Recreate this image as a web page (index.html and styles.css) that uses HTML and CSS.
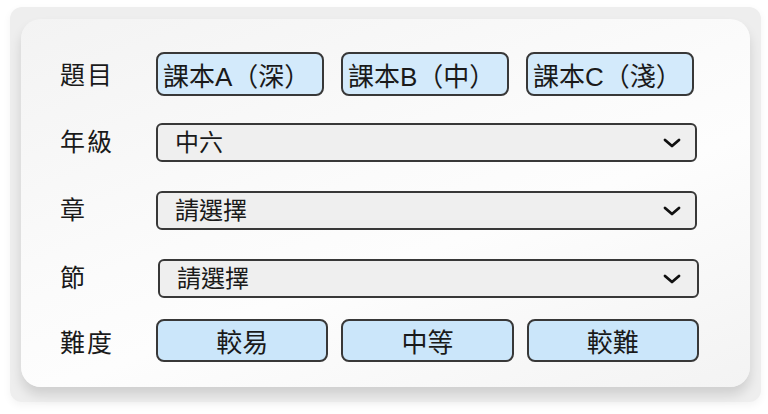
FILE: index.html
```html
<!DOCTYPE html>
<html lang="zh-Hant">
<head>
    <meta charset="UTF-8">
    <meta name="viewport" content="width=device-width, initial-scale=1.0">
    <title>練習設定</title>
    <link rel="stylesheet" href="styles.css">
</head>
<body>
    <div class="frame">
        <div class="card">
            <div class="row row-source">
                <span class="label">題目</span>
                <div class="source-list">
                    <button class="chip">課本A（深）</button>
                    <button class="chip">課本B（中）</button>
                    <button class="chip">課本C（淺）</button>
                </div>
            </div>

            <div class="row">
                <span class="label">年級</span>
                <div class="select-box">
                    <select>
                        <option>中六</option>
                    </select>
                    <svg class="chevron" viewBox="0 0 18 10" width="18" height="10"><path d="M2 2l7 6 7-6" fill="none" stroke="#111" stroke-width="2.8" stroke-linecap="round" stroke-linejoin="round"/></svg>
                </div>
            </div>

            <div class="row">
                <span class="label">章</span>
                <div class="select-box">
                    <select>
                        <option>請選擇</option>
                    </select>
                    <svg class="chevron" viewBox="0 0 18 10" width="18" height="10"><path d="M2 2l7 6 7-6" fill="none" stroke="#111" stroke-width="2.8" stroke-linecap="round" stroke-linejoin="round"/></svg>
                </div>
            </div>

            <div class="row row-section">
                <span class="label">節</span>
                <div class="select-box shifted">
                    <select>
                        <option>請選擇</option>
                    </select>
                    <svg class="chevron" viewBox="0 0 18 10" width="18" height="10"><path d="M2 2l7 6 7-6" fill="none" stroke="#111" stroke-width="2.8" stroke-linecap="round" stroke-linejoin="round"/></svg>
                </div>
            </div>

            <div class="row row-level">
                <span class="label">難度</span>
                <div class="level-list">
                    <button class="level">較易</button>
                    <button class="level">中等</button>
                    <button class="level">較難</button>
                </div>
            </div>
        </div>
    </div>
</body>
</html>
```

FILE: styles.css
```css
body {
    margin: 0;
    padding: 7px 7px 12px 10px;
    background: #fff;
    font-family: 'Liberation Sans', 'Noto Sans CJK TC', sans-serif;
    color: #1a1a1a;
}

/* light grey tray behind the card */
.frame {
    width: 751px;
    box-sizing: border-box;
    padding: 12px 11px 15px 11px;
    background: #eeeeee;
    border-radius: 12px;
    box-shadow: 0 3px 8px rgba(0, 0, 0, 0.05);
}

.card {
    height: 368px;
    box-sizing: border-box;
    padding: 33px 0 0 39px;
    background: linear-gradient(160deg, #f3f3f3 0%, #fbfbfb 45%, #fdfdfd 60%, #f3f3f3 100%);
    border-radius: 20px;
    box-shadow: 0 8px 12px rgba(0, 0, 0, 0.13);
}

.row {
    display: grid;
    grid-template-columns: 96px 543px;
    align-items: center;
    margin-bottom: 29px;
}

.row-source {
    margin-bottom: 27px;
}

.row-section {
    margin-bottom: 21px;
}

.label {
    font-size: 25px;
    letter-spacing: 2px;
    line-height: 1;
}

.row-source .label {
    margin-top: 3px;
}

.row-level .label {
    margin-top: 5px;
}

.source-list {
    display: flex;
    gap: 17px;
}

.chip,
.level {
    height: 44px;
    font-family: inherit;
    font-size: 26px;
    color: #1a1a1a;
    background: #d3eafb;
    border: 2px solid #383838;
    border-radius: 8px;
    cursor: pointer;
}

.chip {
    width: 168px;
    padding: 0 0 0 5px;
    text-align: left;
    white-space: nowrap;
}

.level-list {
    display: grid;
    grid-template-columns: repeat(3, 1fr);
    gap: 13px;
}

.level {
    height: 43px;
    background: #cbe6fa;
}

.select-box {
    position: relative;
}

.select-box.shifted {
    margin-left: 2px;
}

.select-box select {
    width: 541px;
    height: 39px;
    padding: 0 0 0 17px;
    font-family: inherit;
    font-size: 24px;
    color: #1a1a1a;
    background: #efefef;
    border: 2px solid #383838;
    border-radius: 6px;
    appearance: none;
    -webkit-appearance: none;
}

.chevron {
    position: absolute;
    right: 18px;
    top: 15px;
    pointer-events: none;
}
```
